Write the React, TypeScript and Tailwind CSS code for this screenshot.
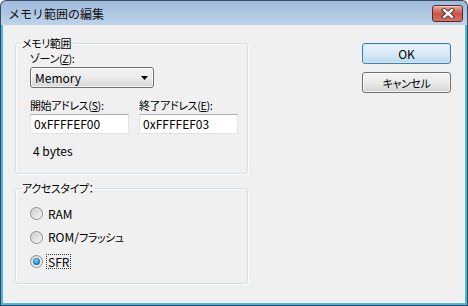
import React from "react";

const jp = "text-[11px] leading-[14px] [font-feature-settings:'palt'] tracking-[-0.4px]";

function CloseButton() {
  return (
    <div className="w-[31px] h-[17px] rounded-[3px] border border-[#5b2a24] bg-gradient-to-b from-[#e8a99c] via-[#c9564a] to-[#d67364] flex items-center justify-center shadow-[inset_0_1px_0_rgba(255,255,255,0.45)]">
      <svg width="14" height="11" viewBox="0 0 14 11">
        <path d="M3 2 L11 9 M11 2 L3 9" stroke="#4a2320" strokeWidth="4.2" strokeLinecap="square" />
        <path d="M3 2 L11 9 M11 2 L3 9" stroke="#ffffff" strokeWidth="2.4" strokeLinecap="square" />
      </svg>
    </div>
  );
}

function Radio({ label, checked, focused }: { label: string; checked?: boolean; focused?: boolean }) {
  return (
    <div className="h-[16px] flex items-center">
      <div className="w-[13px] h-[13px] rounded-full border border-[#8d8d8d] bg-gradient-to-br from-[#d6d6d6] to-[#f6f6f6] flex items-center justify-center shrink-0">
        {checked ? (
          <div className="w-[7px] h-[7px] rounded-full bg-[radial-gradient(circle_at_45%_40%,#8ee0ff_0%,#2a8fd6_45%,#0d3f78_100%)]" />
        ) : (
          <div className="w-[9px] h-[9px] rounded-full bg-gradient-to-br from-[#cfcfcf] to-[#f2f2f2]" />
        )}
      </div>
      <div
        className={
          "ml-[3px] px-[1px] text-[12px] leading-[13px] " +
          (focused ? "border border-dotted border-[#333]" : "border border-transparent")
        }
      >
        {label.split(/(\/.+)/).map((part, i) =>
          i === 1 ? (
            <span key={i}>
              /<span className={jp}>{part.slice(1)}</span>
            </span>
          ) : (
            <span key={i}>{part}</span>
          )
        )}
      </div>
    </div>
  );
}

function TextBox({ value }: { value: string }) {
  return (
    <div className="w-[99px] h-[20px] bg-white border border-[#e2e3ea] border-t-[#abadb3] flex items-center pl-[3px] text-[12px] leading-[14px]">
      {value}
    </div>
  );
}

export default function App() {
  return (
    <div className="w-[468px] h-[306px] flex flex-col overflow-hidden font-['Noto_Sans_CJK_JP',sans-serif] text-black select-none">
      <div className="h-[25px] shrink-0 rounded-t-[6px] border-x border-t border-[#394b60] bg-gradient-to-b from-[#9fbadb] to-[#bed3ea] flex items-center justify-between pl-[7px] pr-[4px]">
        <span className="text-[12px] leading-[14px] pt-[1px] text-[#111]">メモリ範囲の編集</span>
        <div className="self-start mt-[4px]">
          <CloseButton />
        </div>
      </div>
      <div className="flex-1 flex border-x border-b border-[#2f4762] bg-[#4eb6e4] px-[2px] pb-[2px]">
        <div className="flex-1 bg-[#f0f0f0] border-r border-b border-[#fafafa] flex justify-between pl-[12px] pr-[13px] pt-[11px]">
          <div className="w-[233px] flex flex-col">
            <fieldset className="h-[138px] border border-[#d5dfe5] rounded-[3px] m-0 p-0 min-w-0 shadow-[inset_1px_1px_0_#ffffff,1px_1px_0_#ffffff]">
              <legend className={"ml-[5px] px-[1px] " + jp}>メモリ範囲</legend>
              <div className="pl-[14px] pt-[1px]">
                <div className={jp}>
                  ゾーン(<span className="underline">Z</span>):
                </div>
                <div className="mt-[2px] w-[124px] h-[21px] rounded-[3px] border border-[#707070] bg-gradient-to-b from-[#f2f2f2] via-[#ebebeb] to-[#d6d6d6] flex items-center justify-between pl-[4px] pr-[5px] shadow-[inset_0_0_0_1px_rgba(255,255,255,0.7)]">
                  <span className="text-[12px] leading-[14px]">Memory</span>
                  <svg width="7" height="4" viewBox="0 0 7 4">
                    <path d="M0 0 H7 L3.5 4 Z" fill="#000" />
                  </svg>
                </div>
                <div className="mt-[10px] flex gap-[10px]">
                  <div className="flex flex-col">
                    <div className={jp}>
                      開始アドレス(<span className="underline">S</span>):
                    </div>
                    <div className="mt-[2px]">
                      <TextBox value="0xFFFFEF00" />
                    </div>
                  </div>
                  <div className="flex flex-col">
                    <div className={jp}>
                      終了アドレス(<span className="underline">E</span>):
                    </div>
                    <div className="mt-[2px]">
                      <TextBox value="0xFFFFEF03" />
                    </div>
                  </div>
                </div>
                <div className="mt-[10px] pl-[3px] text-[12px] leading-[14px]">4 bytes</div>
              </div>
            </fieldset>
            <fieldset className="mt-[7px] h-[103px] border border-[#d5dfe5] rounded-[3px] m-0 p-0 min-w-0 shadow-[inset_1px_1px_0_#ffffff,1px_1px_0_#ffffff]">
              <legend className={"ml-[5px] px-[1px] " + jp}>アクセスタイプ：</legend>
              <div className="pl-[14px] pt-[10px] flex flex-col gap-[8px]">
                <Radio label="RAM" />
                <Radio label="ROM/フラッシュ" />
                <Radio label="SFR" checked focused />
              </div>
            </fieldset>
          </div>
          <div className="w-[89px] flex flex-col pt-[7px] gap-[8px]">
            <div className="h-[21px] rounded-[3px] border border-[#3c7fb1] bg-gradient-to-b from-[#eaf4fb] via-[#d9ebf7] to-[#bcd9ee] flex items-center justify-center shadow-[inset_0_0_0_1px_#cfe9fb] text-[12px] leading-[14px]">
              OK
            </div>
            <div className="h-[21px] rounded-[3px] border border-[#707070] bg-gradient-to-b from-[#f2f2f2] via-[#ebebeb] to-[#d4d4d4] flex items-center justify-center shadow-[inset_0_0_0_1px_rgba(255,255,255,0.7)]">
              <span className={jp}>キャンセル</span>
            </div>
          </div>
        </div>
      </div>
    </div>
  );
}
